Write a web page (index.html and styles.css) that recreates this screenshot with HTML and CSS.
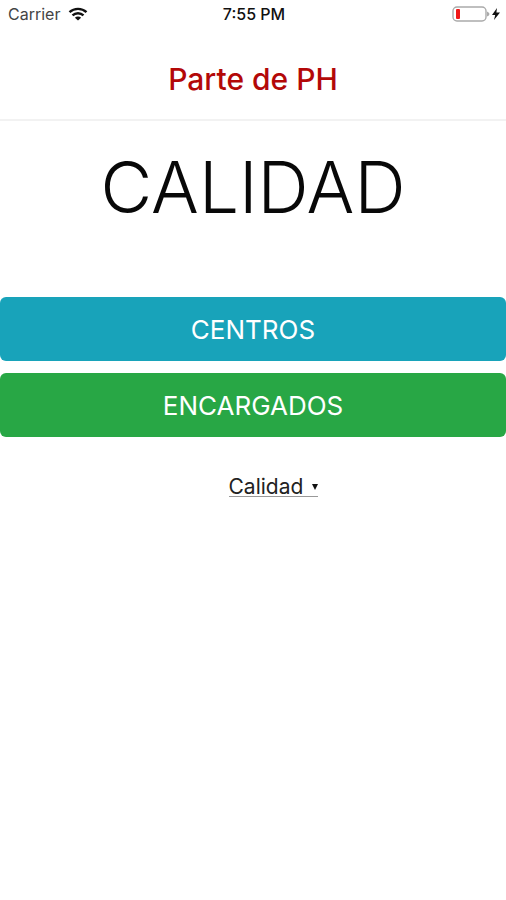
FILE: index.html
```html
<!DOCTYPE html>
<html lang="es">
<head>
<meta charset="utf-8">
<meta name="viewport" content="width=device-width, initial-scale=1">
<title>Parte de PH</title>
<link rel="stylesheet" href="styles.css">
</head>
<body>
<div class="status">
  <div class="carrier">
    <span>Carrier</span>
    <svg class="wifi" viewBox="0 0 20 14" aria-hidden="true">
      <path d="M1.500 5.200a12.400 12.400 0 0 1 17 0M4.500 8.400a8 8 0 0 1 11 0"/>
      <path class="dot" d="M10 13.600 6.900 10.700a4.400 4.400 0 0 1 6.200 0Z"/>
    </svg>
  </div>
  <span class="time">7:55 PM</span>
  <svg class="battery" viewBox="0 0 48 16" aria-hidden="true">
    <rect class="shell" x="1" y="1" width="33" height="14" rx="4"/>
    <rect class="charge" x="4" y="3" width="4" height="10" rx="1"/>
    <path class="tip" d="M35 5.500q2.500 1 2.500 2.500t-2.500 2.500Z"/>
    <path class="bolt" d="M45 2 40 9h3.200L42 14l6-7.500h-3.600Z"/>
  </svg>
</div>
<header class="bar">
  <span class="bar-title">Parte de PH</span>
</header>
<main class="content">
  <h1 class="title" id="section">CALIDAD</h1>
  <div class="actions">
    <button class="action centros" type="button">CENTROS</button>
    <button class="action encargados" type="button">ENCARGADOS</button>
  </div>
  <div class="picker-row">
    <div class="picker">
      <select class="picker-select" aria-labelledby="section">
        <option>Calidad</option>
      </select>
      <svg class="picker-arrow" viewBox="0 0 6 6" aria-hidden="true"><path d="M0 0h6L3 6Z"/></svg>
    </div>
  </div>
</main>
</body>
</html>
```
FILE: styles.css
```css
* {
  box-sizing: border-box;
}

body {
  margin: 0;
  background: #fff;
  color: #111;
  font-family: Inter, "Liberation Sans", sans-serif;
}

.status {
  display: grid;
  grid-template-columns: 1fr auto 1fr;
  align-items: center;
  height: 28px;
  padding: 0 6px 0 8px;
  font-size: 16px;
}

.carrier {
  display: flex;
  align-items: center;
  gap: 8px;
  color: #444;
}

.wifi {
  width: 20px;
  height: 14px;
  fill: none;
  stroke: #111;
  stroke-width: 2.4;
}

.wifi .dot {
  fill: #111;
  stroke: none;
}

.time {
  font-weight: 500;
}

.battery {
  justify-self: end;
  width: 48px;
  height: 16px;
}

.shell {
  fill: #fff;
  stroke: #aaa;
  stroke-width: 1.4;
}

.charge {
  fill: #f01818;
}

.tip {
  fill: #aaa;
}

.bolt {
  fill: #111;
}

.bar {
  display: flex;
  align-items: center;
  justify-content: center;
  height: 93px;
  padding-top: 10px;
  border-bottom: 2px solid #f2f2f2;
}

.bar-title {
  color: #b30808;
  font-size: 30px;
  font-weight: 500;
}

.title {
  margin: 24px 0 68px;
  color: #080808;
  font-size: 71px;
  font-weight: 300;
  line-height: 84px;
  text-align: center;
}

.actions {
  display: grid;
  gap: 12px;
}

.action {
  height: 64px;
  border: 0;
  border-radius: 6px;
  color: #fff;
  font: 26px Inter, "Liberation Sans", sans-serif;
}

.centros {
  background: #18a3ba;
}

.encargados {
  background: #28a745;
}

.picker-row {
  display: flex;
  justify-content: center;
  margin-top: 40px;
  padding-left: 40px;
}

.picker {
  display: flex;
  align-items: center;
  gap: 8px;
  border-bottom: 1px solid #999;
}

.picker-select {
  height: 19px;
  padding: 0;
  border: 0;
  appearance: none;
  background: none;
  color: #222;
  font: 21px/19px Inter, "Liberation Sans", sans-serif;
}

.picker-arrow {
  width: 6px;
  height: 6px;
  fill: #111;
}
```
